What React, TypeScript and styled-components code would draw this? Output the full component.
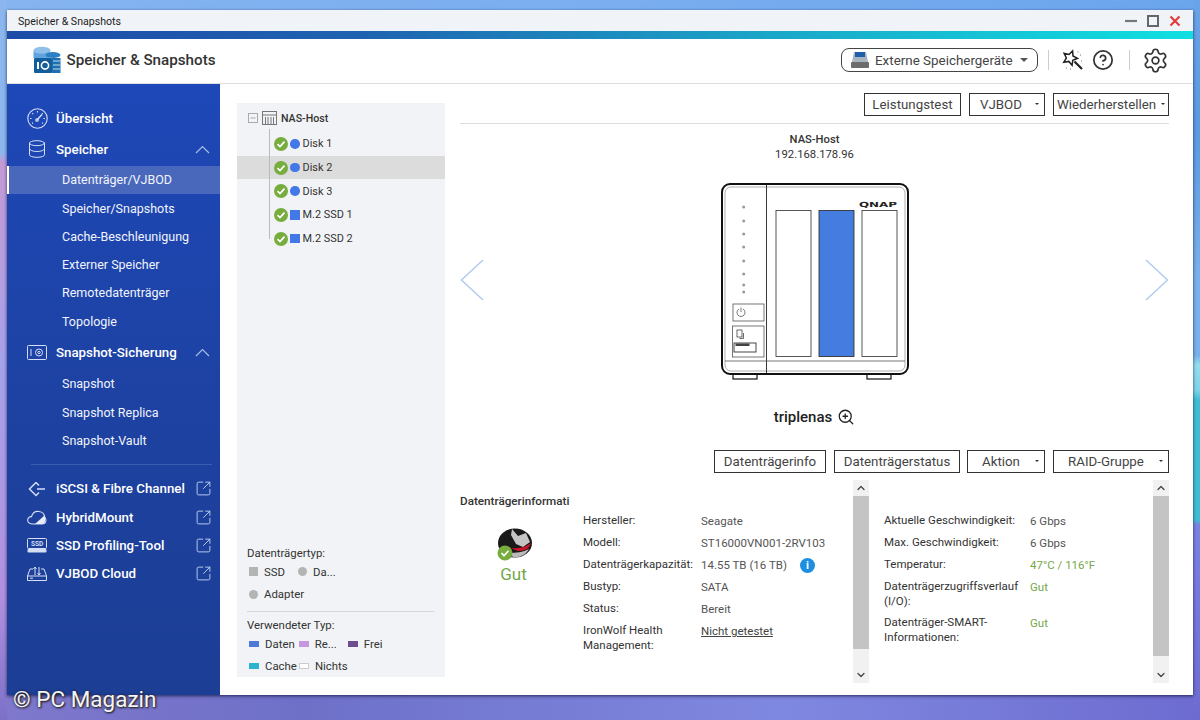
import React from 'react';
import styled, { createGlobalStyle } from 'styled-components';
import {
  ChevronDown,
  ChevronUp,
  CircleHelp,
  Database,
  Settings,
  SquareArrowOutUpRight,
  ZoomIn,
} from 'lucide-react';

const GlobalStyle = createGlobalStyle`
  html, body { margin: 0; padding: 0; height: 100%; }
  body { font-family: Roboto, "Liberation Sans", sans-serif; overflow: hidden; }
`;

const Desktop = styled.div`
  position: relative;
  box-sizing: border-box;
  width: 1200px;
  height: 720px;
  padding: 10px 7px 25px;
  background:
    linear-gradient(180deg, #8cb6ee 0, #8cb6ee 153px, #c39ad6 162px, #a6a2ea 367px, #b190e0 596px, #7c70c8 720px) left top / 7px 100% no-repeat,
    linear-gradient(180deg, #6aa4e8 0, #5a9ae0 130px, #7ab0ec 280px, #7ab0ec 355px, #92deee 365px, #7fd4ea 390px, #41bcd4 400px, #41bcd4 520px, #7a82e0 525px, #6d6bd0 720px) right top / 7px 100% no-repeat,
    linear-gradient(90deg, #7f78cc 0, #6e70c8 25%, #7f88e0 65%, #6d6bd0 100%) left bottom / 100% 25px no-repeat,
    linear-gradient(90deg, #85b4f0, #7aaef0 50%, #6ba5ec) left top / 100% 10px no-repeat;
`;
const Watermark = styled.div`
  position: absolute;
  left: 13px;
  bottom: 8px;
  font-size: 22.5px;
  color: #f4f4f8;
  text-shadow: 0 0 3px #222, 1px 1px 2px #222;
`;
const Window = styled.div`
  display: flex;
  flex-direction: column;
  height: 100%;
  background: #fff;
  box-shadow: 0 1px 3px rgba(20, 20, 60, 0.8);
`;
const TitleBar = styled.div`
  display: flex;
  align-items: center;
  justify-content: space-between;
  box-sizing: border-box;
  height: 21px;
  padding: 1px 12px 0 11px;
  background: #f0f4f8;
  font-size: 10.6px;
  color: #222;
`;
const WinControls = styled.div`
  display: flex;
  align-items: center;
  gap: 10px;
`;
const GradientBar = styled.div`
  height: 8px;
  background: linear-gradient(90deg, #1d4ba8 0, #1f63b0 30%, #1aa8c8 65%, #10dfe2 100%);
`;
const Header = styled.header`
  display: flex;
  align-items: center;
  height: 45px;
  padding: 0 24px 2px 26px;
  border-bottom: 1px solid #dedede;
  box-sizing: border-box;
`;
const AppTitle = styled.h1`
  margin: 0 0 0 5.5px;
  font-size: 15.2px;
  font-weight: 500;
  color: #333;
`;
const Spacer = styled.div`
  flex: 1;
`;
const StoragePill = styled.div`
  display: flex;
  align-items: center;
  box-sizing: border-box;
  width: 197px;
  height: 24px;
  padding: 0 9px 0 8px;
  border: 1px solid #444;
  border-radius: 8px;
  font-size: 13.4px;
  color: #444;
  gap: 5px;
  white-space: nowrap;
`;
const Caret = styled.span<{ $size?: number; $color?: string }>`
  width: 0;
  height: 0;
  margin-left: auto;
  border-left: ${p => p.$size ?? 3}px solid transparent;
  border-right: ${p => p.$size ?? 3}px solid transparent;
  border-top: ${p => p.$size ?? 3}px solid ${p => p.$color ?? '#333'};
`;
const HeadSep = styled.div<{ $left: number }>`
  width: 1px;
  height: 20px;
  margin-left: ${p => p.$left}px;
  background: #ccc;
`;
const HeadIcons = styled.div`
  display: flex;
  align-items: center;
  color: #333;
`;
const Body = styled.div`
  flex: 1;
  display: flex;
  min-height: 0;
`;
const Sidebar = styled.nav`
  box-sizing: border-box;
  width: 213px;
  padding-top: 20px;
  background: linear-gradient(180deg, #1e48b8 0, #1d419f 60%, #1c3e95 100%);
  color: #fff;
`;
const NavMain = styled.div<{ $gap?: number }>`
  display: flex;
  align-items: center;
  height: 28.3px;
  margin-top: ${p => p.$gap ?? 0}px;
  padding-left: 20px;
  padding-right: 10px;
  font-size: 13.3px;
  font-weight: 500;
  gap: 9px;
  color: #fff;
  white-space: nowrap;
  svg { flex-shrink: 0; }
`;
const NavIcon = styled.span`
  display: flex;
  justify-content: center;
  width: 20px;
  color: #d5def5;
`;
const NavEnd = styled.span`
  display: flex;
  margin-left: auto;
  color: #a9bdea;
`;
const ExternalIcon = styled(SquareArrowOutUpRight)`
  margin-right: -2px;
  color: #c3d2f2;
`;
const NavSub = styled.div<{ $active?: boolean; $top?: number }>`
  display: flex;
  align-items: center;
  box-sizing: border-box;
  height: 28.3px;
  margin-top: ${p => p.$top ?? 0}px;
  padding-left: 53px;
  font-size: 12.5px;
  color: #f1f4fc;
  background: ${p => (p.$active ? '#4a68bb' : 'transparent')};
  border-left: 2px solid ${p => (p.$active ? '#fff' : 'transparent')};
`;
const NavDivider = styled.div`
  height: 1px;
  margin: 9.5px 8px 9.5px 24px;
  background: #3c5cb0;
`;
const Main = styled.main`
  flex: 1;
  display: flex;
  min-width: 0;
  padding: 19px 24px 18px 17px;
  gap: 15px;
`;
const TreePanel = styled.aside`
  display: flex;
  flex-direction: column;
  flex-shrink: 0;
  box-sizing: border-box;
  width: 208px;
  background: #f2f3f6;
  font-size: 10.9px;
  color: #333;
`;
const TreeRoot = styled.div`
  display: flex;
  align-items: center;
  height: 28px;
  margin-top: 1px;
  padding-left: 11px;
  gap: 4px;
  font-weight: 500;
  font-size: 10.6px;
`;
const TreeList = styled.div`
  position: relative;
  margin-top: -1px;
  padding-top: 1px;
  &::before {
    content: '';
    position: absolute;
    left: 32px;
    top: -2px;
    bottom: 11px;
    width: 1px;
    background: #bbb;
  }
`;
const TreeRow = styled.div<{ $active?: boolean }>`
  display: flex;
  align-items: center;
  height: 23.7px;
  padding-left: 37px;
  background: ${p => (p.$active ? '#dcdcdc' : 'transparent')};
`;
const CheckDot = styled.span`
  display: flex;
  align-items: center;
  justify-content: center;
  width: 14px;
  height: 14px;
  margin-right: 2px;
  border-radius: 50%;
  background: #77ad3f;
`;
const Kind = styled.span<{ $round?: boolean }>`
  width: 9.5px;
  height: 9.5px;
  margin-right: 3px;
  background: #4279e6;
  border-radius: ${p => (p.$round ? '50%' : '0')};
`;
const Legend = styled.div`
  margin-top: auto;
  padding: 0 11px 0 10px;
  font-size: 11.4px;
  color: #333;
`;
const LegendTitle = styled.div`
  line-height: 16px;
`;
const LegendRow = styled.div`
  display: flex;
  align-items: center;
  height: 22.5px;
  gap: 6px;
  &:last-child { height: 21.5px; }
`;
const Swatch = styled.span<{ $round?: boolean; $color: string; $flat?: boolean; $left?: number }>`
  flex-shrink: 0;
  box-sizing: border-box;
  width: ${p => (p.$flat ? 10 : 9)}px;
  height: ${p => (p.$flat ? 6 : 9)}px;
  margin-left: ${p => p.$left ?? 2}px;
  background: ${p => p.$color};
  border-radius: ${p => (p.$round ? '50%' : '0')};
  border: ${p => (p.$color === '#fff' ? '1px solid #ccc' : 'none')};
`;
const LegendDivider = styled.div`
  height: 1px;
  margin: 5.500px 0 5px;
  background: #d5d5dc;
`;
const Content = styled.section`
  flex: 1;
  display: flex;
  flex-direction: column;
  min-width: 0;
  margin-top: -10px;
  margin-bottom: -6px;
`;
const Toolbar = styled.div`
  display: flex;
  justify-content: flex-end;
  flex-shrink: 0;
  gap: 8px;
`;
const ToolButton = styled.div<{ $w: number; $caretGap?: number; $left?: number }>`
  display: flex;
  align-items: center;
  justify-content: center;
  position: relative;
  box-sizing: border-box;
  width: ${p => p.$w}px;
  height: 23px;
  margin-left: ${p => p.$left ?? 0}px;
  padding-right: ${p => p.$caretGap ?? 0}px;
  border: 1px solid #333;
  font-size: 13.3px;
  color: #444;
  white-space: nowrap;
`;
const ButtonCaret = styled(Caret)<{ $right?: number }>`
  position: absolute;
  right: ${p => p.$right ?? 5}px;
  top: 9px;
  border-width: 2.5px;
`;
const Rule = styled.div`
  height: 1px;
  margin-top: 7px;
  background: #ddd;
`;
const Stage = styled.div`
  flex: 1;
  display: flex;
  align-items: flex-start;
  justify-content: space-between;
  min-height: 0;
`;
const ArrowSlot = styled.div`
  margin-top: 135px;
`;
const StageCenter = styled.div`
  display: flex;
  flex-direction: column;
  align-items: center;
`;
const HostName = styled.div`
  margin-top: 8px;
  font-size: 11.2px;
  font-weight: 500;
  line-height: 15px;
  color: #333;
`;
const HostIp = styled.div`
  margin-bottom: 20px;
  font-size: 11.3px;
  line-height: 15px;
  color: #333;
`;
const DeviceName = styled.div`
  display: flex;
  align-items: center;
  gap: 5px;
  margin-top: 26px;
  font-size: 15px;
  font-weight: 500;
  color: #222;
`;
const Details = styled.div`
  display: flex;
  flex-shrink: 0;
  height: 203px;
  margin-top: 7px;
`;
const HealthCol = styled.div`
  width: 123px;
  flex-shrink: 0;
  padding-top: 14px;
`;
const HealthTitle = styled.div`
  font-size: 11.7px;
  font-weight: 500;
  white-space: nowrap;
  color: #333;
  line-height: 14px;
`;
const HealthBadge = styled.div`
  display: flex;
  flex-direction: column;
  align-items: center;
  width: 107px;
  margin-top: 20px;
  color: #74a84a;
  font-size: 17px;
  gap: 2px;
`;
const InfoGrid = styled.div<{ $label: number; $width: number; $left?: number }>`
  display: grid;
  grid-template-columns: ${p => p.$label}px 1fr;
  grid-auto-rows: min-content;
  row-gap: 6px;
  box-sizing: border-box;
  width: ${p => p.$width}px;
  padding-top: 33px;
  padding-left: ${p => p.$left ?? 0}px;
  font-size: 11.5px;
  line-height: 15px;
  color: #333;
`;
const InfoValue = styled.div<{ $good?: boolean; $link?: boolean }>`
  display: flex;
  align-items: center;
  gap: 13px;
  height: fit-content;
  padding-top: 1px;
  color: ${p => (p.$good ? '#74a84a' : p.$link ? '#444' : '#555')};
  text-decoration: ${p => (p.$link ? 'underline' : 'none')};
`;
const InfoDot = styled.span`
  display: flex;
  align-items: center;
  justify-content: center;
  width: 15px;
  height: 15px;
  border-radius: 50%;
  background: #1e8fe0;
  color: #fff;
  font-size: 11px;
  font-weight: 700;
`;
const ScrollTrack = styled.div`
  display: flex;
  flex-direction: column;
  align-items: center;
  flex-shrink: 0;
  width: 16px;
  height: 100%;
  background: #f1f1f1;
  color: #444;
`;
const ScrollCap = styled.div`
  display: flex;
  align-items: center;
  justify-content: center;
  height: 16px;
`;
const ScrollThumb = styled.div<{ $h: number }>`
  width: 100%;
  height: ${p => p.$h}px;
  background: #c4c4c4;
`;

const Check = () => (
  <svg width="10" height="10" viewBox="0 0 10 10">
    <path d="M1.500 5.200 4 7.600 8.500 2.600" fill="none" stroke="#fff" strokeWidth="1.700" />
  </svg>
);

const Arrow = ({ flip }: { flip?: boolean }) => (
  <svg width="24" height="42" viewBox="0 0 24 42" style={flip ? { transform: 'scaleX(-1)' } : undefined}>
    <path d="M23 1 1.500 21 23 41" fill="none" stroke="#b5cdf0" strokeWidth="1.600" />
  </svg>
);

const NavChevron = () => (
  <svg width="16" height="9" viewBox="0 0 16 9" fill="none" stroke="#a9bdea" strokeWidth="1.200">
    <path d="M2 8 8.500 1.500 15 8" />
  </svg>
);

const GaugeIcon = () => (
  <svg width="21" height="21" viewBox="0 0 21 21" fill="none" stroke="#d5def5" strokeWidth="1.100">
    <circle cx="10.500" cy="10.500" r="9.700" />
    <path d="M10.500 3v1.500M5.200 5.200l1 1M15.800 5.200l-1 1M3 10.500h1.500M18 10.500h-1.500M5 15.500l1-.7M16 15.500l-1-.7" />
    <path d="M9.500 12.500 15 6.500" strokeWidth="1.500" />
    <circle cx="10" cy="12" r="1.300" />
  </svg>
);

const WandIcon = () => (
  <svg width="22" height="22" viewBox="0 0 22 22" fill="none" stroke="#222" strokeWidth="1.500">
    <path d="M10.600 1.950 11 7 15.500 9.300 10.800 11.200 10.100 16.200 6.800 12.400 1.800 13.200 4.400 8.900 2.100 4.400 7 5.500Z" />
    <path d="M12.500 12.500 20 20" strokeWidth="2.200" />
    <path d="M15.500 3h1M18 6h1M4 19h1M8 20h1M19 12h1" stroke="#777" strokeWidth="1.200" />
  </svg>
);

const AppLogo = () => (
  <svg width="28" height="28" viewBox="0 0 28 28">
    <ellipse cx="9" cy="4.500" rx="8.500" ry="3.800" fill="#8fc0ea" />
    <path d="M.5 5v7h16V5c-2 3.500-14 3.500-16 0Z" fill="#5fa3e0" />
    <ellipse cx="20" cy="9" rx="7.500" ry="3" fill="#2b7fc4" />
    <path d="M19 12h8.500v15H19Z" fill="#1f6fb0" />
    <path d="M20 15h7M20 19h7M20 23h7" stroke="#bcdcf2" strokeWidth="1.200" />
    <rect x="1" y="12" width="18" height="15" rx="1" fill="#135d9a" />
    <rect x="4" y="16" width="2" height="7" fill="#fff" />
    <circle cx="12" cy="19.500" r="3.600" fill="none" stroke="#fff" strokeWidth="1.600" />
  </svg>
);

const SnapshotIcon = () => (
  <svg width="20" height="15" viewBox="0 0 20 15" fill="none" stroke="#d5def5" strokeWidth="1">
    <rect x=".5" y=".5" width="19" height="14" rx="1" />
    <path d="M4 4v7" />
    <circle cx="12" cy="7.500" r="3.500" />
    <circle cx="12" cy="7.500" r="1.200" />
  </svg>
);

const FibreIcon = () => (
  <svg width="18" height="16" viewBox="0 0 18 16" fill="none" stroke="#d5def5" strokeWidth="1.500">
    <path d="M8 1.500 1.500 8 8 14.500l3-3M8 1.500l3 3M9 8h8" />
  </svg>
);

const CloudIcon = () => (
  <svg width="20" height="15" viewBox="0 0 20 15">
    <path d="M5 14C2 14 .5 12 .7 9.800 1 7.500 3 6.500 4.500 6.700 5.500 3 8.500 1 12 1.500c3.500.5 5.500 3 5.500 5.500 1.500 1 2 4 .5 6-.7.700-1.500 1-3 1Z" fill="none" stroke="#d5def5" strokeWidth="1.100" />
    <path d="M8 14 18 5v6c0 2-1.500 3-3 3Z" fill="#e8edf9" />
  </svg>
);

const SsdIcon = () => (
  <svg width="20" height="15" viewBox="0 0 20 15">
    <rect x=".5" y=".5" width="19" height="10" rx="1" fill="none" stroke="#d5def5" />
    <text x="10" y="8" fontSize="6.500" fontWeight="700" textAnchor="middle" fill="#d5def5" fontFamily="Roboto, sans-serif">SSD</text>
    <rect x=".5" y="11" width="19" height="3.500" rx="1" fill="#d5def5" />
  </svg>
);

const CloudBoxIcon = () => (
  <svg width="20" height="15" viewBox="0 0 20 15" fill="none" stroke="#d5def5" strokeWidth="1">
    <path d="M.5 10 3 3h3M19.500 10 17 3h-3M.5 10h19v4.500H.5Z" />
    <path d="M8 9V1M6.500 3 8 1l1.500 2M12 1v8M10.500 7 12 9l1.500-2" />
    <path d="M3 12.200h3" />
  </svg>
);

const TreeGridIcon = () => (
  <svg width="15" height="14" viewBox="0 0 15 14" fill="none" stroke="#777" strokeWidth="1">
    <rect x=".5" y=".5" width="14" height="13" />
    <path d="M.5 4h14M3.500 6v7.500M6 6v7.500M9 6v7.500M11.500 6v7.500" />
  </svg>
);

const CollapseBox = () => (
  <svg width="10" height="10" viewBox="0 0 10 10" fill="none" stroke="#aaa">
    <rect x=".5" y=".5" width="9" height="9" />
    <path d="M2.500 5h5" />
  </svg>
);

const Wolf = () => (
  <svg width="36" height="34" viewBox="0 0 36 34">
    <ellipse cx="19" cy="15" rx="17" ry="14.500" fill="#1a1a1a" />
    <path d="M16 1 22 8l8-3 4 9-7 5-7-3-5-9Z" fill="#fff" opacity=".75" />
    <path d="M14 20c7 1 14 0 21-5-2 6-6 8-13 8Z" fill="#c8152b" />
    <path d="M13 25c7 0 14-1 20-4-3 6-10 9-16 8Z" fill="#bbb" />
    <circle cx="9" cy="25" r="7.500" fill="#77ad3f" />
    <path d="M5.500 25 8 27.700l4.500-5" fill="none" stroke="#fff" strokeWidth="1.700" />
  </svg>
);

const Device = () => (
  <svg width="190" height="200" viewBox="0 0 190 200">
    <rect x="13" y="191" width="24" height="6" fill="#fff" stroke="#222" strokeWidth="1.300" />
    <rect x="147" y="191" width="24" height="6" fill="#fff" stroke="#222" strokeWidth="1.300" />
    <rect x="2" y="2" width="186" height="190" rx="8" fill="#fff" stroke="#111" strokeWidth="2" />
    <rect x="5" y="5" width="180" height="184" rx="6" fill="none" stroke="#999" strokeWidth=".8" />
    <path d="M46.500 3v188" stroke="#222" strokeWidth=".9" />
    <path d="M5 179h180" stroke="#555" strokeWidth=".8" />
    {[25, 39, 52, 65, 79, 92, 103, 110].map(y => (
      <circle key={y} cx="23.700" cy={y} r="1.500" fill="#999" />
    ))}
    <rect x="13" y="122" width="31" height="17" fill="#fff" stroke="#555" strokeWidth=".8" />
    <path d="M19 127a4 4 0 1 0 4 0M21 125.500v4.500" fill="none" stroke="#555" strokeWidth=".8" />
    <rect x="12.500" y="144" width="31.500" height="31" fill="#fff" stroke="#555" strokeWidth=".8" />
    <rect x="17" y="148" width="5" height="7" fill="none" stroke="#444" strokeWidth=".8" />
    <path d="M23.500 151v5.500h-4" fill="none" stroke="#444" strokeWidth=".8" />
    <rect x="14" y="161" width="22" height="9" fill="none" stroke="#333" strokeWidth=".9" />
    <rect x="15.500" y="161.500" width="14" height="2.500" fill="#444" />
    <rect x="56" y="28.500" width="35" height="146" fill="#fff" stroke="#444" strokeWidth=".9" />
    <rect x="99" y="28.500" width="35" height="146" fill="#447cdf" stroke="#333" strokeWidth=".9" />
    <rect x="142" y="28.500" width="35" height="146" fill="#fff" stroke="#444" strokeWidth=".9" />
    <text x="139" y="24.700" fontSize="7" fontWeight="700" fill="#222" fontFamily="'DejaVu Sans', sans-serif" textLength="38" lengthAdjust="spacingAndGlyphs">QNAP</text>
  </svg>
);

const ExternalDrive = () => (
  <svg width="20" height="18" viewBox="0 0 20 18">
    <path d="M4 1h12l2 10H2Z" fill="#a8b4c0" />
    <rect x="5" y="1" width="10" height="5" fill="#1d5fa8" />
    <rect x="1" y="11" width="18" height="6" rx="1" fill="#6c6c6c" />
  </svg>
);

const App: React.FC = () => (
  <Desktop>
    <GlobalStyle />
    <Window>
      <TitleBar>
        Speicher &amp; Snapshots
        <WinControls>
          <svg width="12" height="12" viewBox="0 0 12 12"><path d="M0 6h12" stroke="#777" strokeWidth="2.200" /></svg>
          <svg width="12" height="12" viewBox="0 0 12 12"><rect x="1" y="1" width="10" height="10" fill="none" stroke="#666" strokeWidth="2" /></svg>
          <svg width="12" height="12" viewBox="0 0 12 12"><path d="M1.500 1.500l9 9m0-9-9 9" stroke="#e23b3b" strokeWidth="2.200" /></svg>
        </WinControls>
      </TitleBar>
      <GradientBar />
      <Header>
        <AppLogo />
        <AppTitle>Speicher &amp; Snapshots</AppTitle>
        <Spacer />
        <StoragePill>
          <ExternalDrive />
          Externe Speichergeräte
          <Caret $size={4} $color="#555" />
        </StoragePill>
        <HeadSep $left={10} />
        <HeadIcons>
          <span style={{ display: 'flex', marginLeft: 13 }}><WandIcon /></span>
          <CircleHelp size={22} strokeWidth={1.900} style={{ marginLeft: 8 }} />
        </HeadIcons>
        <HeadSep $left={15} />
        <HeadIcons>
          <Settings size={27} strokeWidth={1.500} style={{ marginLeft: 12 }} />
        </HeadIcons>
      </Header>
      <Body>
        <Sidebar>
          <NavMain>
            <NavIcon><GaugeIcon /></NavIcon>
            Übersicht
          </NavMain>
          <NavMain $gap={3}>
            <NavIcon><Database size={20} strokeWidth={1.200} /></NavIcon>
            Speicher
            <NavEnd><NavChevron /></NavEnd>
          </NavMain>
          <NavSub $active $top={2}>Datenträger/VJBOD</NavSub>
          <NavSub>Speicher/Snapshots</NavSub>
          <NavSub>Cache-Beschleunigung</NavSub>
          <NavSub>Externer Speicher</NavSub>
          <NavSub>Remotedatenträger</NavSub>
          <NavSub>Topologie</NavSub>
          <NavMain $gap={3}>
            <NavIcon><SnapshotIcon /></NavIcon>
            Snapshot-Sicherung
            <NavEnd><NavChevron /></NavEnd>
          </NavMain>
          <NavSub $top={3}>Snapshot</NavSub>
          <NavSub>Snapshot Replica</NavSub>
          <NavSub>Snapshot-Vault</NavSub>
          <NavDivider />
          <NavMain>
            <NavIcon><FibreIcon /></NavIcon>
            iSCSI &amp; Fibre Channel
            <NavEnd><ExternalIcon size={17} strokeWidth={1.300} /></NavEnd>
          </NavMain>
          <NavMain>
            <NavIcon><CloudIcon /></NavIcon>
            HybridMount
            <NavEnd><ExternalIcon size={17} strokeWidth={1.300} /></NavEnd>
          </NavMain>
          <NavMain>
            <NavIcon><SsdIcon /></NavIcon>
            SSD Profiling-Tool
            <NavEnd><ExternalIcon size={17} strokeWidth={1.300} /></NavEnd>
          </NavMain>
          <NavMain>
            <NavIcon><CloudBoxIcon /></NavIcon>
            VJBOD Cloud
            <NavEnd><ExternalIcon size={17} strokeWidth={1.300} /></NavEnd>
          </NavMain>
        </Sidebar>
        <Main>
          <TreePanel>
            <TreeRoot>
              <CollapseBox />
              <TreeGridIcon />
              NAS-Host
            </TreeRoot>
            <TreeList>
              <TreeRow><CheckDot><Check /></CheckDot><Kind $round />Disk 1</TreeRow>
              <TreeRow $active><CheckDot><Check /></CheckDot><Kind $round />Disk 2</TreeRow>
              <TreeRow><CheckDot><Check /></CheckDot><Kind $round />Disk 3</TreeRow>
              <TreeRow><CheckDot><Check /></CheckDot><Kind />M.2 SSD 1</TreeRow>
              <TreeRow><CheckDot><Check /></CheckDot><Kind />M.2 SSD 2</TreeRow>
            </TreeList>
            <Legend>
              <LegendTitle>Datenträgertyp:</LegendTitle>
              <LegendRow>
                <Swatch $color="#b4b4b4" />SSD
                <Swatch $color="#b4b4b4" $round $left={7} />Da...
              </LegendRow>
              <LegendRow>
                <Swatch $color="#b4b4b4" $round />Adapter
              </LegendRow>
              <LegendDivider />
              <LegendTitle>Verwendeter Typ:</LegendTitle>
              <LegendRow>
                <Swatch $color="#4f79d8" $flat />Daten
                <Swatch $color="#c698e0" $flat $left={-2} />Re...
                <Swatch $color="#6b4d90" $flat $left={5} />Frei
              </LegendRow>
              <LegendRow>
                <Swatch $color="#2cb4cc" $flat />Cache
                <Swatch $color="#fff" $flat $left={-4} />Nichts
              </LegendRow>
            </Legend>
          </TreePanel>
          <Content>
            <Toolbar>
              <ToolButton $w={97}>Leistungstest</ToolButton>
              <ToolButton $w={76} $caretGap={12}>VJBOD<ButtonCaret /></ToolButton>
              <ToolButton $w={116} $caretGap={9}>Wiederherstellen<ButtonCaret $right={3} /></ToolButton>
            </Toolbar>
            <Rule />
            <Stage>
              <ArrowSlot><Arrow /></ArrowSlot>
              <StageCenter>
                <HostName>NAS-Host</HostName>
                <HostIp>192.168.178.96</HostIp>
                <Device />
                <DeviceName>triplenas <ZoomIn size={18} strokeWidth={1.700} /></DeviceName>
              </StageCenter>
              <ArrowSlot><Arrow flip /></ArrowSlot>
            </Stage>
            <Toolbar>
              <ToolButton $w={112}>Datenträgerinfo</ToolButton>
              <ToolButton $w={126}>Datenträgerstatus</ToolButton>
              <ToolButton $w={78} $caretGap={10} $left={-1}>Aktion<ButtonCaret /></ToolButton>
              <ToolButton $w={116} $caretGap={10}>RAID-Gruppe<ButtonCaret /></ToolButton>
            </Toolbar>
            <Details>
              <HealthCol>
                <HealthTitle>Datenträgerinformati</HealthTitle>
                <HealthBadge>
                  <Wolf />
                  Gut
                </HealthBadge>
              </HealthCol>
              <InfoGrid $label={118} $width={270}>
                <div>Hersteller:</div><InfoValue>Seagate</InfoValue>
                <div>Modell:</div><InfoValue>ST16000VN001-2RV103</InfoValue>
                <div>Datenträgerkapazität:</div><InfoValue>14.55 TB (16 TB)<InfoDot>i</InfoDot></InfoValue>
                <div>Bustyp:</div><InfoValue>SATA</InfoValue>
                <div>Status:</div><InfoValue>Bereit</InfoValue>
                <div>IronWolf Health Management:</div><InfoValue $link>Nicht getestet</InfoValue>
              </InfoGrid>
              <ScrollTrack>
                <ScrollCap><ChevronUp size={12} strokeWidth={2.500} /></ScrollCap>
                <ScrollThumb $h={153} />
                <Spacer />
                <ScrollCap><ChevronDown size={12} strokeWidth={2.500} /></ScrollCap>
              </ScrollTrack>
              <InfoGrid $label={146} $width={284} $left={15}>
                <div>Aktuelle Geschwindigkeit:</div><InfoValue>6 Gbps</InfoValue>
                <div>Max. Geschwindigkeit:</div><InfoValue>6 Gbps</InfoValue>
                <div>Temperatur:</div><InfoValue $good>47°C / 116°F</InfoValue>
                <div>Datenträgerzugriffsverlauf (I/O):</div><InfoValue $good>Gut</InfoValue>
                <div>Datenträger-SMART-Informationen:</div><InfoValue $good>Gut</InfoValue>
              </InfoGrid>
              <ScrollTrack>
                <ScrollCap><ChevronUp size={12} strokeWidth={2.500} /></ScrollCap>
                <ScrollThumb $h={160} />
                <Spacer />
                <ScrollCap><ChevronDown size={12} strokeWidth={2.500} /></ScrollCap>
              </ScrollTrack>
            </Details>
          </Content>
        </Main>
      </Body>
    </Window>
    <Watermark>© PC Magazin</Watermark>
  </Desktop>
);

export default App;
